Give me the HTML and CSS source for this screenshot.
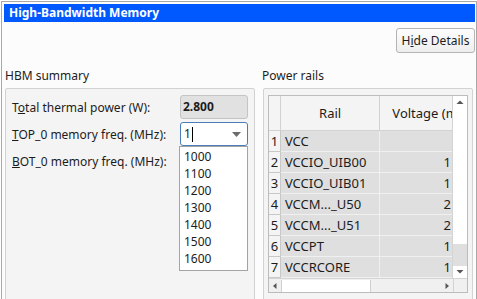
FILE: index.html
```html
<!DOCTYPE html>
<html>
<head>
  <title>High-Bandwidth Memory</title>
  <meta name="viewport" content="width=device-width, initial-scale=1">
  <link rel="stylesheet" href="styles.css">
</head>
<body>
  <div class="window">
    <div class="titlebar">High-Bandwidth Memory</div>

    <div class="toolbar">
      <button class="btn">H<u>i</u>de Details</button>
    </div>
    <div class="separator"></div>

    <div class="panels">
      <section class="panel panel-summary">
        <div class="panel-title">HBM summary</div>
        <div class="group">
          <div class="form-row">
            <label>T<u>o</u>tal thermal power (W):</label>
            <div class="field readonly">2.800</div>
          </div>
          <div class="form-row">
            <label><u>T</u>OP_0 memory freq. (MHz):</label>
            <div class="combo-wrap">
              <div class="field combo focused">
                <span class="combo-text">1<span class="cursor"></span></span>
                <svg class="combo-arrow" width="9" height="5" viewBox="0 0 9 5"><path d="M0 0h9L4.5 5z" fill="#6b6b6b"/></svg>
              </div>
              <ul class="popup">
                <li>1000</li>
                <li>1100</li>
                <li>1200</li>
                <li>1300</li>
                <li>1400</li>
                <li>1500</li>
                <li>1600</li>
              </ul>
            </div>
          </div>
          <div class="form-row">
            <label><u>B</u>OT_0 memory freq. (MHz):</label>
            <div class="field combo"></div>
          </div>
        </div>
      </section>

      <section class="panel panel-rails">
        <div class="panel-title">Power rails</div>
        <div class="group group-table">
          <div class="table">
            <div class="table-main">
              <div class="viewport">
                <div class="row header">
                  <div class="cell num"></div>
                  <div class="cell rail">Rail</div>
                  <div class="cell volt">Voltage (mV)</div>
                </div>
                <div class="row">
                  <div class="cell num">1</div>
                  <div class="cell rail">VCC</div>
                  <div class="cell volt"></div>
                </div>
                <div class="row">
                  <div class="cell num">2</div>
                  <div class="cell rail">VCCIO_UIB00</div>
                  <div class="cell volt">1</div>
                </div>
                <div class="row">
                  <div class="cell num">3</div>
                  <div class="cell rail">VCCIO_UIB01</div>
                  <div class="cell volt">1</div>
                </div>
                <div class="row">
                  <div class="cell num">4</div>
                  <div class="cell rail">VCCM..._U50</div>
                  <div class="cell volt">2</div>
                </div>
                <div class="row">
                  <div class="cell num">5</div>
                  <div class="cell rail">VCCM..._U51</div>
                  <div class="cell volt">2</div>
                </div>
                <div class="row">
                  <div class="cell num">6</div>
                  <div class="cell rail">VCCPT</div>
                  <div class="cell volt">1</div>
                </div>
                <div class="row">
                  <div class="cell num">7</div>
                  <div class="cell rail">VCCRCORE</div>
                  <div class="cell volt">1</div>
                </div>
              </div>
              <div class="vscroll">
                <svg class="arrow" width="14" height="12" viewBox="0 0 14 12"><path d="M3.5 8h7L7 4.5z" fill="#555"/></svg>
                <div class="vtrack"></div>
                <div class="vhandle"></div>
                <svg class="arrow" width="14" height="12" viewBox="0 0 14 12"><path d="M3.5 4h7L7 7.5z" fill="#555"/></svg>
              </div>
            </div>
            <div class="hscroll">
              <div class="hbar">
                <svg class="arrow" width="12" height="12" viewBox="0 0 12 12"><path d="M7.5 3v6L4 6z" fill="#555"/></svg>
                <div class="hhandle"></div>
                <div class="htrack"></div>
                <svg class="arrow" width="12" height="12" viewBox="0 0 12 12"><path d="M4.5 3v6L8 6z" fill="#555"/></svg>
              </div>
              <div class="corner"></div>
            </div>
          </div>
        </div>
      </section>
    </div>

    <div class="splitter"><span class="grip"></span></div>
  </div>
</body>
</html>
```

FILE: styles.css
```css
body {
  margin: 0;
  background-color: #ffffff;
  font-family: "Noto Sans", sans-serif;
  font-size: 12px;
  color: #1c1c1c;
}
.window {
  width: 476px;
  height: 298px;
  margin: 1px 0 0 1px;
  border: 1px solid #a8a8a8;
  border-bottom: none;
  padding: 2px 1px 0 2px;
  box-sizing: border-box;
  background-color: #fcfcfc;
  display: flex;
  flex-direction: column;
}
.titlebar {
  height: 18px;
  line-height: 18px;
  padding-left: 5px;
  background-color: #0058ff;
  color: #ffffff;
  font-weight: bold;
}
.toolbar {
  display: flex;
  justify-content: flex-end;
  margin-top: 6px;
}
.btn {
  width: 79px;
  height: 25px;
  padding: 0;
  border: 1px solid #b4b4b4;
  border-radius: 3px;
  background: linear-gradient(#fdfdfd, #eeeeee);
  font-family: "Noto Sans", sans-serif;
  font-size: 12px;
  color: #1c1c1c;
}
.separator {
  height: 1px;
  margin-top: 6px;
  background-color: #a8a8a8;
}
.panels {
  display: flex;
  gap: 8px;
  padding: 9px 2px 0 1px;
  flex: 1;
}
.panel {
  display: flex;
  flex-direction: column;
}
.panel-summary {
  width: 250px;
}
.panel-rails {
  width: 210px;
}
.panel-title {
  line-height: 16px;
  margin-bottom: 4px;
}
.panel-rails .panel-title {
  margin-left: -1px;
}
.group {
  flex: 1;
  border: 1px solid #d2d2d2;
  border-radius: 2px;
  background-color: #f4f4f4;
  padding: 6px 6px 0 6px;
  display: flex;
  flex-direction: column;
  gap: 3px;
}
.form-row {
  display: flex;
  justify-content: space-between;
  align-items: center;
  height: 24px;
}
.form-row u {
  text-decoration-thickness: 1px;
}
.field {
  width: 68px;
  height: 24px;
  box-sizing: border-box;
  border: 1px solid #c4c4c4;
  border-radius: 3px;
  padding: 0 2px;
  line-height: 22px;
}
.readonly {
  background-color: #e1e1e1;
  font-weight: bold;
}
.combo-wrap {
  position: relative;
}
.combo {
  background-color: #ffffff;
  display: flex;
  align-items: center;
  justify-content: space-between;
  padding-right: 6px;
}
.focused {
  border-color: #4a7cb8;
}
.combo-text {
  display: flex;
  align-items: center;
  padding-left: 1px;
}
.cursor {
  display: inline-block;
  width: 1px;
  height: 15px;
  margin-left: 1px;
  background-color: #000000;
}
.popup {
  position: absolute;
  left: -1px;
  top: 100%;
  width: 69px;
  box-sizing: border-box;
  margin: 0;
  padding: 1px 0 3px 4px;
  list-style: none;
  background-color: #ffffff;
  border: 1px solid #a4a4a4;
  z-index: 2;
}
.popup li {
  line-height: 17px;
}
.group-table {
  padding: 6px 4px 7px 4px;
}
.table {
  flex: 1;
  border: 1px solid #bcbcbc;
  background-color: #ffffff;
  display: flex;
  flex-direction: column;
  font-size: 13px;
}
.table-main {
  flex: 1;
  display: flex;
  overflow: hidden;
}
.viewport {
  width: 184px;
  overflow: hidden;
  background-color: #ffffff;
}
.row {
  display: flex;
  height: 21px;
}
.row.header {
  height: 35px;
}
.cell {
  box-sizing: border-box;
  border-bottom: 1px solid #f0f0f0;
  border-right: 1px solid #f0f0f0;
  background-color: #dfdfdf;
  line-height: 20px;
  white-space: nowrap;
  overflow: hidden;
}
.cell.num {
  width: 12px;
  background-color: #f4f4f4;
  border-color: #c8c8c8;
  text-align: center;
}
.cell.rail {
  width: 100px;
  padding-left: 4px;
}
.cell.volt {
  width: 72px;
  border-right: none;
  text-align: right;
  padding-right: 1px;
}
.header .cell {
  background-color: #f4f4f4;
  border-color: #d2d2d2;
  line-height: 34px;
}
.header .rail {
  text-align: center;
  padding-left: 0;
}
.header .volt {
  text-align: left;
  padding-left: 12px;
}
.vscroll {
  width: 14px;
  border-left: 1px solid #d4d4d4;
  display: flex;
  flex-direction: column;
  background-color: #ffffff;
}
.vtrack {
  flex: 1;
}
.vhandle {
  height: 22px;
  background-color: #dfdfdf;
}
.arrow {
  display: block;
  flex-shrink: 0;
}
.hscroll {
  height: 13px;
  display: flex;
  border-top: 1px solid #d4d4d4;
}
.hbar {
  width: 184px;
  display: flex;
  align-items: center;
  background-color: #f0f0f0;
}
.hhandle {
  width: 90px;
  height: 12px;
  box-sizing: border-box;
  background-color: #ffffff;
  border: 1px solid #d0d0d0;
  border-top: none;
  border-bottom: none;
}
.htrack {
  flex: 1;
}
.corner {
  flex: 1;
  border-left: 1px solid #d4d4d4;
  background-color: #f0f0f0;
}
.splitter {
  height: 4px;
  display: flex;
  justify-content: center;
}
.grip {
  width: 16px;
  margin-top: 1px;
  border-top: 1px dotted #9a9a9a;
}
```
